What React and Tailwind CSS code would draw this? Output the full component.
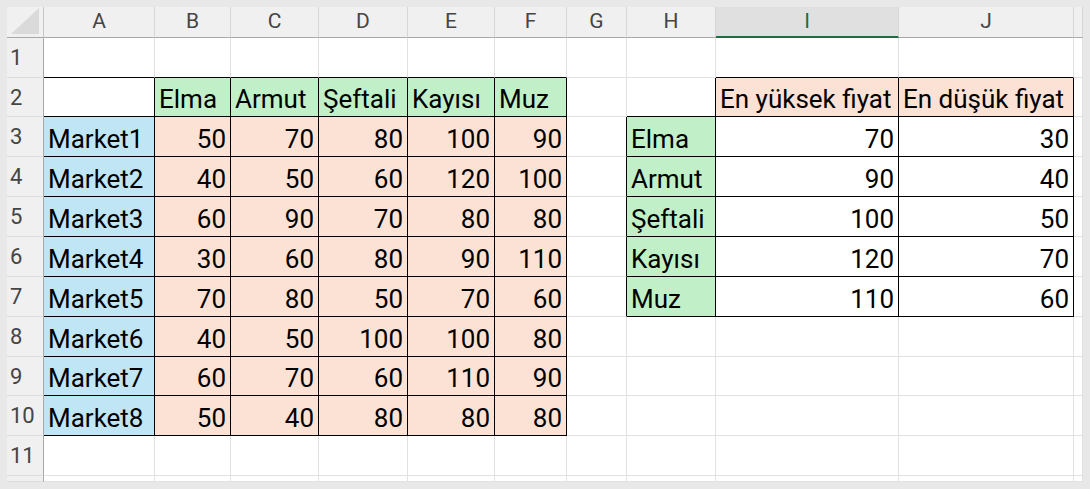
import React from 'react';

const COLS = ['A', 'B', 'C', 'D', 'E', 'F', 'G', 'H', 'I', 'J', ''];
const ROW_COUNT = 12;

const BLUE = 'bg-[#c0e6f5]';
const PEACH = 'bg-[#fbe2d5]';
const GREEN = 'bg-[#c1f0c8]';

const FRUITS = ['Elma', 'Armut', 'Şeftali', 'Kayısı', 'Muz'];
const PRICES = [
  [50, 70, 80, 100, 90],
  [40, 50, 60, 120, 100],
  [60, 90, 70, 80, 80],
  [30, 60, 80, 90, 110],
  [70, 80, 50, 70, 60],
  [40, 50, 100, 100, 80],
  [60, 70, 60, 110, 90],
  [50, 40, 80, 80, 80],
];
const HIGH = [70, 90, 100, 120, 110];
const LOW = [30, 40, 50, 70, 60];

// rows are 1-based like Excel, cols 0-based (0 = A)
function boxed(r, c) {
  if (r >= 2 && r <= 10 && c >= 0 && c <= 5) return true;
  if (r === 2 && (c === 8 || c === 9)) return true;
  if (r >= 3 && r <= 7 && c >= 7 && c <= 9) return true;
  return false;
}

function cellContent(r, c) {
  if (r === 2 && c === 0) return { text: '', bg: 'bg-white' };
  if (r === 2 && c >= 1 && c <= 5) return { text: FRUITS[c - 1], bg: GREEN };
  if (r >= 3 && r <= 10 && c === 0) return { text: `Market${r - 2}`, bg: BLUE };
  if (r >= 3 && r <= 10 && c >= 1 && c <= 5)
    return { text: String(PRICES[r - 3][c - 1]), bg: PEACH, right: true };
  if (r === 2 && c === 8) return { text: 'En yüksek fiyat', bg: PEACH };
  if (r === 2 && c === 9) return { text: 'En düşük fiyat', bg: PEACH };
  if (r >= 3 && r <= 7 && c === 7) return { text: FRUITS[r - 3], bg: GREEN };
  if (r >= 3 && r <= 7 && c === 8) return { text: String(HIGH[r - 3]), bg: 'bg-white', right: true };
  if (r >= 3 && r <= 7 && c === 9) return { text: String(LOW[r - 3]), bg: 'bg-white', right: true };
  return { text: '', bg: 'bg-white' };
}

function Cell({ r, c }) {
  const { text, bg, right } = cellContent(r, c);
  const rightBorder = boxed(r, c) || boxed(r, c + 1) ? 'border-r-black' : 'border-r-[#e1e1e1]';
  const bottomBorder = boxed(r, c) || boxed(r + 1, c) ? 'border-b-black' : 'border-b-[#e1e1e1]';
  return (
    <div
      className={`flex items-end overflow-visible whitespace-nowrap border-r border-b pb-[4px] text-[26px] leading-[26px] text-black ${bg} ${rightBorder} ${bottomBorder} ${
        right ? 'justify-end pr-[4px]' : 'justify-start pl-[4px]'
      }`}
    >
      {text}
    </div>
  );
}

export default function App() {
  const rows = Array.from({ length: ROW_COUNT }, (_, i) => i + 1);

  return (
    <div
      className="w-[1090px] h-[489px] bg-[#e8e8e8] pt-[7px] pl-[7px] overflow-hidden"
      style={{ fontFamily: 'Roboto, "Noto Sans", sans-serif' }}
    >
      <div className="grid w-[1076px] h-[475px] overflow-hidden bg-white grid-cols-[37px_111px_76px_88px_89px_87px_72px_60px_89px_183px_175px_9px] grid-rows-[31px_40px_39px_40px_40px_40px_40px_40px_40px_39px_40px_40px_6px]">
        {/* corner */}
        <div className="bg-[#f0f0f0] border-r border-b border-r-[#c6c6c6] border-b-[#a8a8a8]">
          <svg width="36" height="30" viewBox="0 0 36 30" className="block">
            <polygon points="4,27 32,27 32,1" fill="#dadada" />
          </svg>
        </div>

        {/* column headers */}
        {COLS.map((col) =>
          col === 'I' ? (
            <div
              key={col}
              className="flex items-center justify-center bg-[#e0e0e0] border-r border-r-[#d6d6d6] border-b-2 border-b-[#1e6e42] text-[21px] text-[#1e6e42]"
            >
              {col}
            </div>
          ) : (
            <div
              key={col || 'K'}
              className="flex items-center justify-center bg-[#f0f0f0] border-r border-b border-r-[#d6d6d6] border-b-[#a8a8a8] text-[21px] text-[#454545]"
            >
              {col}
            </div>
          )
        )}

        {/* body */}
        {rows.map((r) => (
          <React.Fragment key={r}>
            <div className="flex items-center pl-[3px] bg-[#f0f0f0] border-r border-b border-r-[#a8a8a8] border-b-[#dcdcdc] text-[22px] text-[#454545]">
              {r <= 11 ? r : ''}
            </div>
            {COLS.map((_, c) => (
              <Cell key={c} r={r} c={c} />
            ))}
          </React.Fragment>
        ))}
      </div>
    </div>
  );
}
